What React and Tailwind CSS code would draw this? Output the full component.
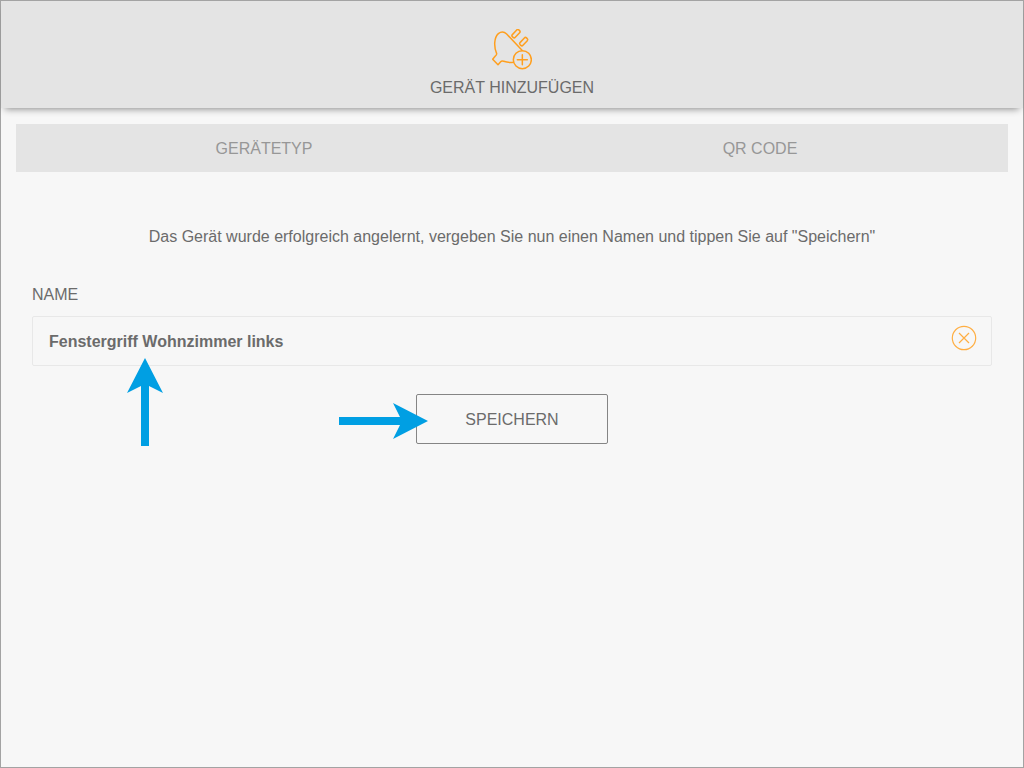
import { useState } from 'react';

const PlugAddIcon = () => (
    <svg viewBox="60 27 120 123" className="w-10 h-[41px]" fill="none" stroke="#ff9f1e" strokeWidth="4.5" strokeLinejoin="round" strokeLinecap="round" aria-hidden="true">
        <path d="M150 91 L104 42 Q92 31 79 41 C66 53 65 80 74 101 Q74 105 70 108 L62 118 L78 134 L86 125 Q89 122 95 124 Q110 129 124 127" />
        <rect x="-6" y="-14" width="12" height="28" rx="4.5" transform="translate(132 41) rotate(43)" />
        <rect x="-6" y="-14" width="12" height="28" rx="4.5" transform="translate(155 65) rotate(43)" />
        <circle cx="151" cy="119" r="27" />
        <path d="M151 104 V134 M136 119 H166" />
    </svg>
);

const ClearIcon = () => (
    <svg viewBox="0 0 26 26" className="w-[26px] h-[26px]" fill="none" stroke="#ffae42" strokeWidth="1.2" aria-hidden="true">
        <circle cx="13" cy="13" r="11.7" />
        <path d="M8 8 L18 18 M18 8 L8 18" />
    </svg>
);

const ArrowUp = () => (
    <svg viewBox="0 0 36 88" className="absolute left-[94px] top-[41px] w-9 h-[88px] pointer-events-none" fill="#009fe3" aria-hidden="true">
        <path d="M18 0 L36 35 L22 28 V88 H14 V28 L0 35 Z" />
    </svg>
);

const ArrowRight = () => (
    <svg viewBox="0 0 89 36" className="absolute right-[180px] top-[9px] w-[89px] h-9 pointer-events-none" fill="#009fe3" aria-hidden="true">
        <path d="M89 18 L54 36 L61 22 H0 V14 H61 L54 0 Z" />
    </svg>
);

const App = () => {
    const [name, setName] = useState('Fenstergriff Wohnzimmer links');

    return (
        <div className="min-h-screen border border-[#a3a3a3] bg-[#f7f7f7] text-[#6b6b6b] text-base font-['Liberation_Sans',Arial,sans-serif]">
            <header className="flex flex-col items-center bg-[#e4e4e4] pt-7 pb-2 shadow-[0_5px_7px_-4px_rgba(0,0,0,0.45)]">
                <PlugAddIcon />
                <h1 className="mt-1.5">GERÄT HINZUFÜGEN</h1>
            </header>

            <main className="px-[15px] pt-4">
                <nav className="grid grid-cols-2 h-12 bg-[#e4e4e4] text-[#979797]">
                    <button type="button" className="pt-0.5">GERÄTETYP</button>
                    <button type="button" className="pt-0.5">QR CODE</button>
                </nav>

                <form className="px-4 pt-[53px]" onSubmit={(e) => e.preventDefault()}>
                    <p className="text-center">
                        Das Gerät wurde erfolgreich angelernt, vergeben Sie nun einen Namen und tippen Sie auf "Speichern"
                    </p>

                    <label htmlFor="device-name" className="block mt-[34px]">NAME</label>
                    <div className="relative flex items-start mt-[9px] h-[50px] rounded-xs border border-[#e8e8e8]">
                        <input
                            id="device-name"
                            type="text"
                            className="flex-1 min-w-0 h-full px-4 pt-0.5 font-bold bg-transparent outline-none"
                            value={name}
                            onChange={(e) => setName(e.target.value)}
                        />
                        <button type="button" aria-label="Namen löschen" className="mt-2 mr-3.5" onClick={() => setName('')}>
                            <ClearIcon />
                        </button>
                        <ArrowUp />
                    </div>

                    <div className="flex justify-center mt-7">
                        <div className="relative">
                            <button type="submit" className="w-48 h-[50px] pt-0.5 rounded-xs border border-[#858585]">
                                SPEICHERN
                            </button>
                            <ArrowRight />
                        </div>
                    </div>
                </form>
            </main>
        </div>
    );
};

export default App;
